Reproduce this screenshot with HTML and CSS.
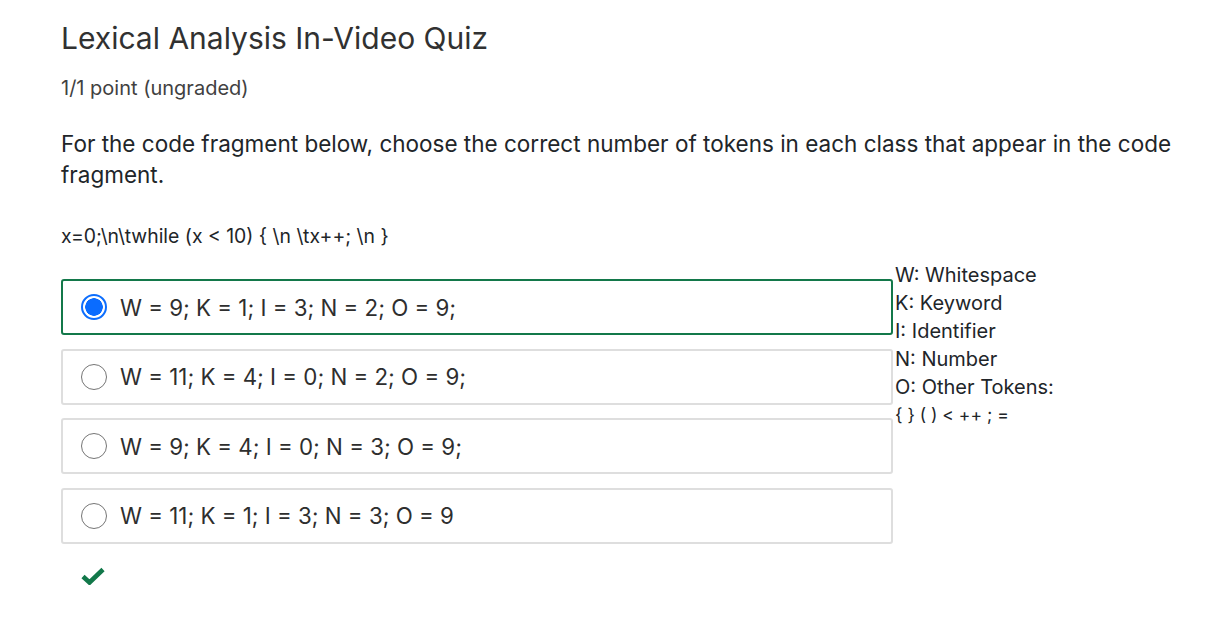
FILE: index.html
```html
<!DOCTYPE html>
<html>
<head>
<meta charset="utf-8">
<link rel="stylesheet" href="styles.css">
</head>
<body>
<div class="problem">
  <h2 class="title">Lexical Analysis In-Video Quiz</h2>
  <div class="points">1/1 point (ungraded)</div>
  <p class="question">For the code fragment below, choose the correct number of tokens in each class that appear in the code fragment.</p>
  <p class="code">x=0;\n\twhile (x &lt; 10) { \n \tx++; \n }</p>
  <div class="answer-area">
    <div class="choices">
      <label class="choice selected"><span class="radio checked"></span><span class="label">W = 9; K = 1; I = 3; N = 2; O = 9;</span></label>
      <label class="choice"><span class="radio"></span><span class="label">W = 11; K = 4; I = 0; N = 2; O = 9;</span></label>
      <label class="choice"><span class="radio"></span><span class="label">W = 9; K = 4; I = 0; N = 3; O = 9;</span></label>
      <label class="choice"><span class="radio"></span><span class="label">W = 11; K = 1; I = 3; N = 3; O = 9</span></label>
    </div>
    <div class="legend">
      <div>W: Whitespace</div>
      <div>K: Keyword</div>
      <div>I: Identifier</div>
      <div>N: Number</div>
      <div>O: Other Tokens:</div>
      <div class="ops">{ } ( ) &lt; ++ ; =</div>
    </div>
  </div>
  <div class="status">
    <svg width="24" height="18" viewBox="0 0 24 18"><path d="M2 9.5 L8.5 15.5 L22 2.5" fill="none" stroke="#12784a" stroke-width="4.6" stroke-linejoin="miter"/></svg>
  </div>
</div>
</body>
</html>
```
FILE: styles.css
```css
html, body {
  margin: 0;
  padding: 0;
  background: #fff;
}
body {
  font-family: Inter, "Open Sans", sans-serif;
  color: #212529;
}
.problem {
  padding: 18px 0 0 61px;
}
.title {
  margin: 0;
  font-size: 30px;
  font-weight: 400;
  line-height: 40px;
  color: #313131;
}
.points {
  margin-top: 18px;
  font-size: 20px;
  line-height: 24px;
  color: #414141;
}
.question {
  margin: 28px 0 0 0;
  font-size: 22.5px;
  line-height: 31px;
  color: #212529;
  padding-right: 40px;
}
.code {
  margin: 34px 0 0 0;
  font-size: 19.4px;
  line-height: 24px;
  color: #212529;
}
.answer-area {
  display: flex;
  align-items: flex-start;
  margin-top: 31px;
}
.choices {
  display: flex;
  flex-direction: column;
  gap: 13.5px;
  width: 832px;
}
.choice {
  display: flex;
  align-items: center;
  height: 56px;
  box-sizing: border-box;
  border: 2px solid #dedede;
  border-radius: 3px;
  padding-left: 18px;
}
.choice.selected {
  border-color: #13784a;
}
.radio {
  width: 26px;
  height: 26px;
  box-sizing: border-box;
  border-radius: 50%;
  border: 1.5px solid #757575;
  margin-right: 13px;
  flex: none;
}
.radio.checked {
  border: 2px solid #0d6efd;
  background: radial-gradient(circle, #0a6cff 0 8.5px, #fff 9px);
}
.label {
  font-size: 22.3px;
  color: #2e2e2e;
}
.legend {
  margin-top: -18px;
  margin-left: 2px;
  font-size: 20px;
  line-height: 28px;
  color: #212529;
}
.legend .ops {
  font-size: 17.5px;
}
.status {
  margin-top: 23px;
  padding-left: 20px;
}
```
